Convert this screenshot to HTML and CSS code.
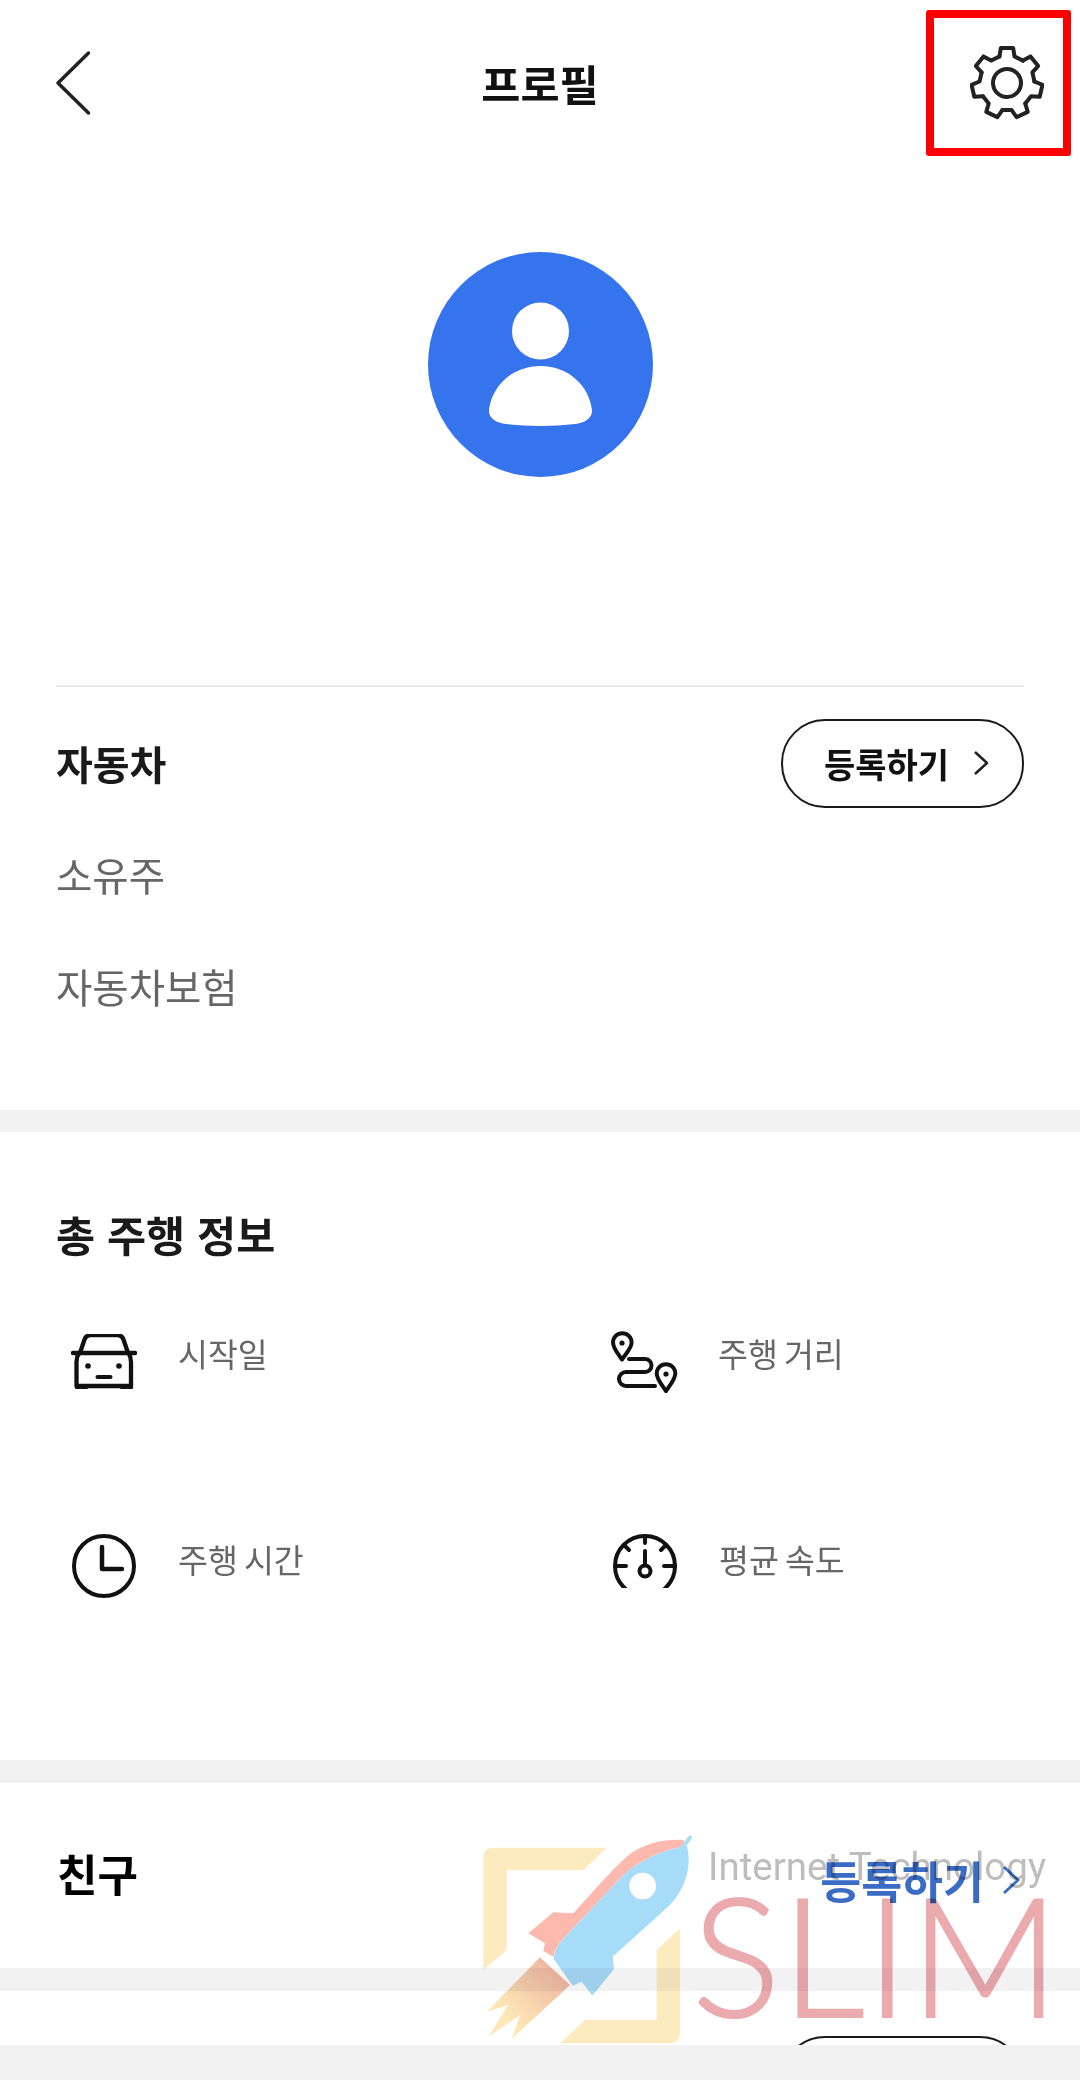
FILE: index.html
```html
<!DOCTYPE html>
<html lang="ko">
<head>
<meta charset="utf-8">
<title>프로필</title>
<link rel="stylesheet" href="styles.css">
</head>
<body>
<div class="screen">
  <header class="topbar">
    <svg class="back" viewBox="0 0 36 66"><path d="M33.5 3 3 33l30.500 30"/></svg>
    <h1 class="page-title">프로필</h1>
    <div class="settings">
      <svg class="gear" viewBox="0 0 74 74">
        <defs><path id="tooth" d="M29.420 10.560 30.840 2.040H43.160L44.580 10.560 52.940 14.590"/></defs>
        <use href="#tooth"/>
        <use href="#tooth" transform="rotate(51.43 37 37)"/>
        <use href="#tooth" transform="rotate(102.86 37 37)"/>
        <use href="#tooth" transform="rotate(154.29 37 37)"/>
        <use href="#tooth" transform="rotate(205.71 37 37)"/>
        <use href="#tooth" transform="rotate(257.14 37 37)"/>
        <use href="#tooth" transform="rotate(308.57 37 37)"/>
        <circle cx="37" cy="37" r="14"/>
      </svg>
    </div>
  </header>

  <section class="profile">
    <svg class="avatar" viewBox="0 0 225 225"><circle class="avatar-bg" cx="112.500" cy="112.500" r="112.500"/><circle class="avatar-fg" cx="112.500" cy="79" r="28.500"/><path class="avatar-fg" d="M112.500 114c-29 0-49 21-51.500 44-.5 8 7 13 17 14 22 2.500 47 2.500 69 0 10-1 17.500-6 17-14-2.500-23-22.500-44-51.500-44z"/></svg>
  </section>

  <section class="car">
    <div class="row-head">
      <h2 class="title">자동차</h2>
      <div class="pill">등록하기<svg class="chev" viewBox="0 0 16 26"><path d="m2 2 12 11L2 24"/></svg></div>
    </div>
    <p class="item item-owner">소유주</p>
    <p class="item item-ins">자동차보험</p>
  </section>

  <section class="drive">
    <h2 class="title title-wide">총 주행 정보</h2>
    <div class="stats">
      <div class="stat">
        <svg class="ico ico-car" viewBox="0 0 66 55"><path d="M2 19h62" stroke-width="4.500"/><path d="M9 19 13 7c1-4 3-6 7-6h26c4 0 6 2 7 6l4 12"/><path d="M8 19c-2 3-2.500 5-2.500 9v24H60V28c0-4-.5-6-2.500-9"/><path d="M26.500 43h13" stroke-width="4"/><path d="M6 53h9M51 53h9" stroke-width="4.500"/><circle class="dot" cx="17" cy="32" r="2.800"/><circle class="dot" cx="48" cy="32" r="2.800"/></svg>
        <span class="label">시작일</span>
      </div>
      <div class="stat">
        <svg class="ico ico-route" viewBox="0 0 67 62"><path d="M11 28.500C6.500 22 2 17 2 11.500a9.300 9.300 0 0 1 18.600 0C20.600 17 15.500 22 11 28.500z"/><circle class="dot" cx="11" cy="12" r="2.600"/><path d="M55 60c-4.500-6.500-9.300-12-9.300-17.500a9.300 9.300 0 0 1 18.600 0C64.300 48 59.500 53.500 55 60z"/><circle class="dot" cx="55" cy="43" r="2.600"/><path d="M18 28h16a6.500 6.500 0 0 1 0 13H15a7 7 0 0 0 0 14h29"/></svg>
        <span class="label">주행 거리</span>
      </div>
      <div class="stat">
        <svg class="ico ico-clock" viewBox="0 0 66 66"><circle cx="33" cy="33" r="30"/><path d="M31 14v22h20" stroke-width="4.500"/></svg>
        <span class="label">주행 시간</span>
      </div>
      <div class="stat">
        <svg class="ico ico-gauge" viewBox="0 0 66 55"><circle cx="33" cy="33" r="30"/><path d="M33 3v7M12 12l5 5M54 12l-5 5M3 33h11M52 33h11M33 18v14"/><circle cx="33" cy="38" r="5.500"/></svg>
        <span class="label">평균 속도</span>
      </div>
    </div>
  </section>

  <section class="friends">
    <h2 class="title title-big">친구</h2>
    <div class="link">등록하기<svg class="chev-blue" viewBox="0 0 18 30"><path d="m2 2 14 13L2 28"/></svg></div>
  </section>

  <section class="last">
    <div class="pill pill-cut"></div>
  </section>

  <div class="watermark">
    <svg class="rocket" viewBox="0 0 690 690">
      <defs>
        <linearGradient id="fire" x1="1" y1="0" x2="0" y2="1"><stop offset="0.1" stop-color="#eeb3a0"/><stop offset="0.75" stop-color="#fde8b6"/></linearGradient>
      </defs>
      <path class="wm-y" d="M40 95Q40 68 70 68H410L340 135H110V375L40 435Z"/>
      <path class="wm-y" d="M630 310V620Q630 655 595 655H270L345 585H560V375Z"/>
      <path fill="url(#fire)" d="M210 397 300 480 125 642 150 570 55 635 115 540 50 560Z"/>
      <path class="wm-p" d="M175 325 250 262 310 265C360 210 420 140 470 95 520 55 580 42 640 45L650 62C590 70 510 105 460 150L300 320C270 350 255 370 250 395L220 378 225 355Z"/>
      <path class="wm-b" d="M250 400C255 370 270 350 300 320L460 150C510 105 590 70 650 62 665 110 655 180 600 240L428 395 432 432 367 512 335 470 308 482Z"/>
      <path class="wm-tip" d="M642 62 660 38"/>
      <circle class="wm-w" cx="518" cy="183" r="40"/>
    </svg>
    <span class="wm-sub">Internet Technology</span>
    <span class="wm-slim">SLIM</span>
  </div>
</div>
</body>
</html>
```
FILE: styles.css
```css
* { box-sizing: border-box; margin: 0; padding: 0; }
html, body { width: 1080px; height: 2080px; overflow: hidden; background: #f2f2f3; }
body { font-family: "Noto Sans CJK KR", "Noto Sans", sans-serif; color: #111; }
svg { display: block; fill: none; stroke: #111; }
.screen { position: relative; width: 1080px; height: 2080px; overflow: hidden; }

.topbar { display: grid; grid-template-columns: 1fr auto 1fr; align-items: center; height: 166px; padding: 0 9px 0 55px; background: #fff; }
.back { width: 36px; height: 66px; stroke-width: 3.500; stroke: #222; stroke-linecap: round; stroke-linejoin: round; }
.page-title { font-size: 42.500px; font-weight: 700; line-height: 1; transform: translateX(-23px); }
.settings { justify-self: end; display: flex; align-items: center; justify-content: center; width: 145px; height: 146px; border: 8px solid #f00; border-radius: 3px; margin-top: -1px; }
.gear { width: 74px; height: 74px; stroke: #222; stroke-width: 4; stroke-linecap: round; stroke-linejoin: round; margin-left: 16px; }

.profile { display: flex; justify-content: center; height: 519px; padding-top: 86px; background: #fff; }
.avatar { width: 225px; height: 225px; stroke: none; }
.avatar-bg { fill: #3574ec; }
.avatar-fg { fill: #fff; }

.car { height: 425px; padding: 0 56px; background: #fff; }
.row-head { display: flex; align-items: center; justify-content: space-between; height: 154px; border-top: 2px solid #e8e8e8; }
.title { font-size: 40px; font-weight: 700; line-height: 1; color: #1a1a1a; }
.pill { display: flex; align-items: center; flex: none; width: 243px; height: 89px; padding-left: 41px; border: 2px solid #1a1a1a; border-radius: 44px; font-size: 34px; font-weight: 700; color: #111; }
.chev { width: 16px; height: 26px; margin-left: 24px; stroke-width: 2.500; stroke: #222; stroke-linejoin: round; }
.item { font-size: 39.500px; line-height: 56px; color: #666; }
.item-owner { margin-top: 7px; }
.item-ins { margin-top: 56px; }

.drive { height: 628px; margin-top: 22px; padding: 78px 56px 0; background: #fff; }
.title-wide { font-size: 42.500px; line-height: 48px; }
.stats { display: grid; grid-template-columns: 557px 411px; grid-auto-rows: 206px; margin-top: 73px; }
.stat { display: flex; align-items: flex-start; }
.ico { flex: none; width: 66px; height: auto; margin: 0 41px 0 15px; stroke-width: 4; stroke: #111; stroke-linecap: round; stroke-linejoin: round; }
.ico-car { margin-top: 3px; stroke-width: 4.300; }
.ico-route { width: 67px; margin: 0 40px 0 -2px; }
.ico-clock { margin-top: -4px; }
.ico-gauge { margin: -4px 41px 0 -1px; }
.dot { fill: #111; stroke: none; }
.label { font-size: 32.500px; line-height: 44px; color: #666; word-spacing: -3px; }

.friends { display: flex; align-items: center; justify-content: space-between; height: 185px; margin-top: 23px; padding: 0 60px 0 57px; background: #fff; }
.title-big { font-size: 44px; color: #000; margin-top: -6px; }
.link { display: flex; align-items: center; font-size: 44.500px; font-weight: 700; color: #3a6cc6; margin-top: 8px; }
.chev-blue { width: 18px; height: 30px; margin-left: 18px; stroke: #3a6cc6; stroke-width: 2.800; }

.last { display: flex; justify-content: flex-end; align-items: flex-start; height: 54px; margin-top: 23px; padding: 45px 56px 0 0; background: #fff; overflow: hidden; }

.watermark { position: absolute; left: 470px; top: 1825px; width: 600px; height: 230px; pointer-events: none; mix-blend-mode: multiply; }
.rocket { position: absolute; left: 0; top: 0; width: 230px; height: 230px; stroke: none; }
.wm-y { fill: #fdebc0; }
.wm-p { fill: #fdb9ae; }
.wm-b { fill: #a7dcf8; }
.wm-w { fill: #fff; }
.wm-tip { stroke: #a7dcf8; stroke-width: 12; stroke-linecap: round; }
.wm-sub { position: absolute; left: 238px; top: 14px; font-family: "Roboto", sans-serif; font-weight: 400; font-size: 38.500px; line-height: 56px; color: #bdbdbd; white-space: nowrap; }
.wm-slim { position: absolute; left: 222px; top: 28px; font-family: "Lato", sans-serif; font-weight: 300; font-size: 165px; line-height: 200px; letter-spacing: 1px; color: #ebabae; -webkit-text-stroke: 2px #ebabae; white-space: nowrap; }
```
